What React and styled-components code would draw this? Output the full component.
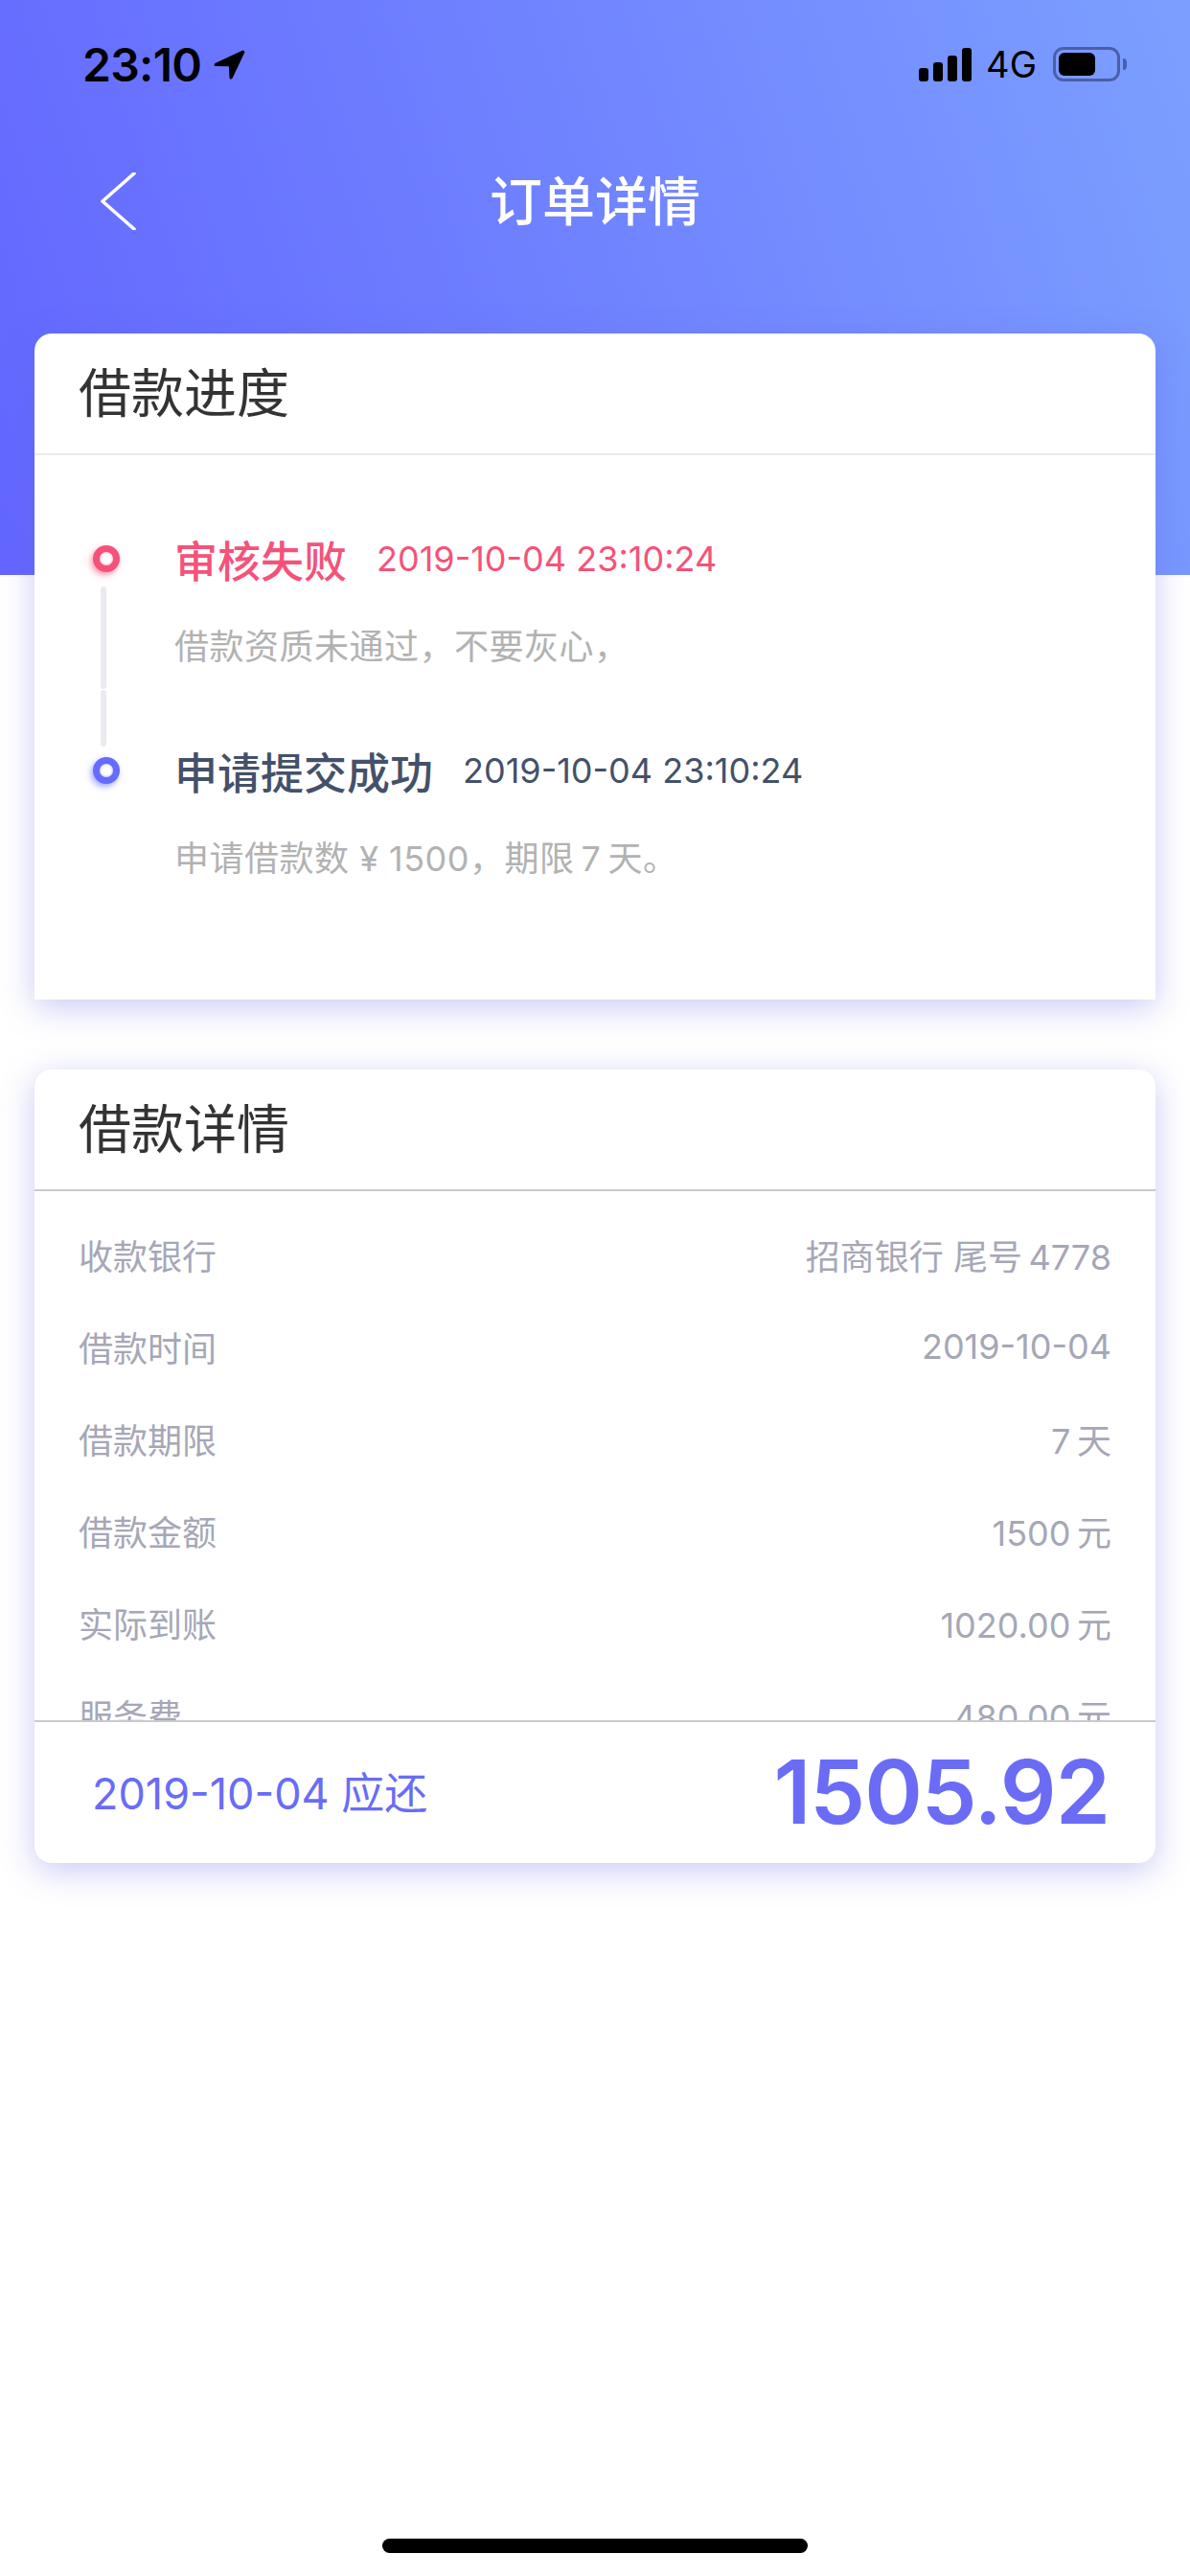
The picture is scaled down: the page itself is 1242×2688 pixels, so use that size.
import React from "react";
import styled, { createGlobalStyle } from "styled-components";

const GlobalStyle = createGlobalStyle`
  html, body {
    margin: 0;
    padding: 0;
    background: #fff;
  }
  body {
    font-family: Inter, "Noto Sans CJK SC", sans-serif;
  }
`;

const Page = styled.div`
  width: 1242px;
  height: 2688px;
  display: flex;
  flex-direction: column;
  overflow: hidden;
  background: #fff;
`;

const Header = styled.header`
  height: 600px;
  margin-bottom: -252px;
  flex-shrink: 0;
  background: linear-gradient(72deg, #6366ff 0%, #7c9fff 100%);
`;

const StatusBar = styled.div`
  height: 36px;
  padding: 49px 73px 0 86px;
  display: flex;
  justify-content: space-between;
  align-items: center;
`;

const StatusLeft = styled.div`
  display: flex;
  align-items: center;
  gap: 13px;
`;

const StatusRight = styled.div`
  display: flex;
  align-items: center;
`;

const Time = styled.span`
  font-size: 48px;
  font-weight: 600;
  letter-spacing: -0.7px;
  color: #000;
`;

const Carrier = styled.span`
  font-size: 38px;
  color: #000;
  margin: 0 17px 0 15px;
`;

const Signal = styled.div`
  display: flex;
  align-items: flex-end;
  gap: 5px;
  height: 35px;
`;

const SignalBar = styled.i`
  display: block;
  width: 10px;
  height: ${(p) => p.$h}px;
  border-radius: 3px;
  background: #000;
`;

const Battery = styled.div`
  position: relative;
  width: 70px;
  height: 36px;
  box-sizing: border-box;
  border: 3px solid #4a5fa8;
  border-radius: 11px;
  padding: 3px;
  &::after {
    content: "";
    position: absolute;
    right: -10px;
    top: 9px;
    width: 4px;
    height: 12px;
    background: #4a5fa8;
    border-radius: 0 4px 4px 0;
  }
`;

const BatteryFill = styled.div`
  width: 38px;
  height: 100%;
  background: #000;
  border-radius: 6px;
`;

const NavBar = styled.div`
  position: relative;
  height: 60px;
  margin-top: 95px;
  display: flex;
  align-items: center;
  justify-content: center;
`;

const BackButton = styled.button`
  position: absolute;
  left: 104px;
  top: 0;
  padding: 0;
  border: 0;
  background: none;
  display: flex;
`;

const NavTitle = styled.h1`
  margin: 0;
  font-size: 55px;
  font-weight: 500;
  color: #fff;
  line-height: 60px;
`;

const Content = styled.main`
  position: relative;
  display: flex;
  flex-direction: column;
  gap: 73px;
  padding: 0 36px;
`;

const Card = styled.section`
  background: #fff;
  border-radius: ${(p) => (p.$square ? "18px 18px 0 0" : "18px")};
  box-shadow: 0 8px 34px rgba(96, 100, 224, 0.34);
`;

const CardHeader = styled.div`
  height: 125px;
  box-sizing: content-box;
  padding-left: 46px;
  display: flex;
  align-items: center;
  border-bottom: 2px solid ${(p) => p.$line};
  font-size: 55px;
  line-height: 119px;
  color: #333;
`;

const Timeline = styled.div`
  height: 568px;
  box-sizing: border-box;
  padding: 94px 0 0 61px;
`;

const Step = styled.div`
  display: flex;
  height: 221px;
`;

const Rail = styled.div`
  width: 28px;
  margin-right: 57px;
  display: flex;
  flex-direction: column;
`;

const Dot = styled.div`
  width: 28px;
  height: 28px;
  box-sizing: border-box;
  flex-shrink: 0;
  border-radius: 50%;
  border: 7px solid ${(p) => p.$color};
  background: #fff;
  filter: blur(0.7px);
  box-shadow: -2px 3px 6px ${(p) => p.$color}99, inset 0 0 3px ${(p) => p.$color}88;
`;

const Segment = styled.div`
  width: 6px;
  height: ${(p) => p.$h}px;
  margin: ${(p) => p.$mt}px 0 0 8px;
  border-radius: 3px;
  background: #e9ebef;
`;

const StepBody = styled.div`
  flex: 1;
`;

const StepHead = styled.div`
  height: 28px;
  display: flex;
  align-items: center;
  gap: 31px;
  color: ${(p) => p.$color};
`;

const StepTitle = styled.span`
  font-size: 45px;
  font-weight: 500;
`;

const StepTime = styled.span`
  font-size: 36px;
`;

const StepDesc = styled.p`
  margin: 58px 0 0;
  height: 40px;
  line-height: 40px;
  font-size: 36px;
  letter-spacing: 0.5px;
  color: #b2b2b2;
`;

const DetailList = styled.div`
  height: 552px;
  overflow: hidden;
  padding-top: 18px;
  box-sizing: border-box;
`;

const DetailRow = styled.div`
  height: 96px;
  padding: 0 46px;
  display: flex;
  align-items: center;
  justify-content: space-between;
  font-size: 36px;
  color: #a6a7b6;
`;

const CardFooter = styled.div`
  height: 147px;
  padding: 0 48px 0 60px;
  display: flex;
  align-items: center;
  justify-content: space-between;
  border-top: 2px solid #c9c9ce;
  color: #6a6cf6;
`;

const DueLabel = styled.span`
  font-size: 45px;
  margin-bottom: 4px;
`;

const DueAmount = styled.span`
  font-size: 92px;
  font-weight: 600;
  letter-spacing: -1px;
  margin-bottom: 2px;
`;

const HomeIndicator = styled.div`
  width: 444px;
  height: 15px;
  margin: auto auto 24px;
  border-radius: 8px;
  background: #000;
`;

const steps = [
  {
    title: "审核失败",
    time: "2019-10-04 23:10:24",
    desc: "借款资质未通过，不要灰心，",
    color: "#f5527a",
    dot: "#f5527a",
    connected: true,
  },
  {
    title: "申请提交成功",
    time: "2019-10-04 23:10:24",
    desc: "申请借款数 ¥ 1500，期限\u20097\u2009天。",
    color: "#44516a",
    dot: "#666cff",
  },
];

const details = [
  ["收款银行", "招商银行 尾号\u20094778"],
  ["借款时间", "2019-10-04"],
  ["借款期限", "7\u2009天"],
  ["借款金额", "1500\u2009元"],
  ["实际到账", "1020.00\u2009元"],
  ["服务费", "480.00\u2009元"],
];

const App = () => {
  return (
    <Page>
      <GlobalStyle />
      <Header>
        <StatusBar>
          <StatusLeft>
            <Time>23:10</Time>
            <svg width="33" height="31" viewBox="0 0 32 30">
              <path
                d="M1.5 13.5 29 .8c1.5-.7 2.8.6 2.2 2L19 28.6c-.8 1.6-3 1.2-3-.6l-.6-11.4L2 16.5c-1.6-.2-2-2.2-.5-3z"
                fill="#000"
              />
            </svg>
          </StatusLeft>
          <StatusRight>
            <Signal>
              <SignalBar $h={14} />
              <SignalBar $h={20} />
              <SignalBar $h={27} />
              <SignalBar $h={35} />
            </Signal>
            <Carrier>4G</Carrier>
            <Battery>
              <BatteryFill />
            </Battery>
          </StatusRight>
        </StatusBar>
        <NavBar>
          <BackButton>
            <svg width="38" height="60" viewBox="0 0 38 60" fill="none">
              <path d="M36 1 3 30l33 29" stroke="#fff" strokeWidth="3.6" strokeLinecap="round" strokeLinejoin="round" />
            </svg>
          </BackButton>
          <NavTitle>订单详情</NavTitle>
        </NavBar>
      </Header>
      <Content>
        <Card $square>
          <CardHeader $line="#ebebeb">借款进度</CardHeader>
          <Timeline>
            {steps.map((step) => (
              <Step key={step.title}>
                <Rail>
                  <Dot $color={step.dot} />
                  {step.connected && (
                    <>
                      <Segment $h={107} $mt={15} />
                      <Segment $h={59} $mt={1} />
                    </>
                  )}
                </Rail>
                <StepBody>
                  <StepHead $color={step.color}>
                    <StepTitle>{step.title}</StepTitle>
                    <StepTime>{step.time}</StepTime>
                  </StepHead>
                  <StepDesc>{step.desc}</StepDesc>
                </StepBody>
              </Step>
            ))}
          </Timeline>
        </Card>
        <Card>
          <CardHeader $line="#c9c9c9">借款详情</CardHeader>
          <DetailList>
            {details.map(([label, value]) => (
              <DetailRow key={label}>
                <span>{label}</span>
                <span>{value}</span>
              </DetailRow>
            ))}
          </DetailList>
          <CardFooter>
            <DueLabel>2019-10-04 应还</DueLabel>
            <DueAmount>1505.92</DueAmount>
          </CardFooter>
        </Card>
      </Content>
      <HomeIndicator />
    </Page>
  );
};

export default App;
